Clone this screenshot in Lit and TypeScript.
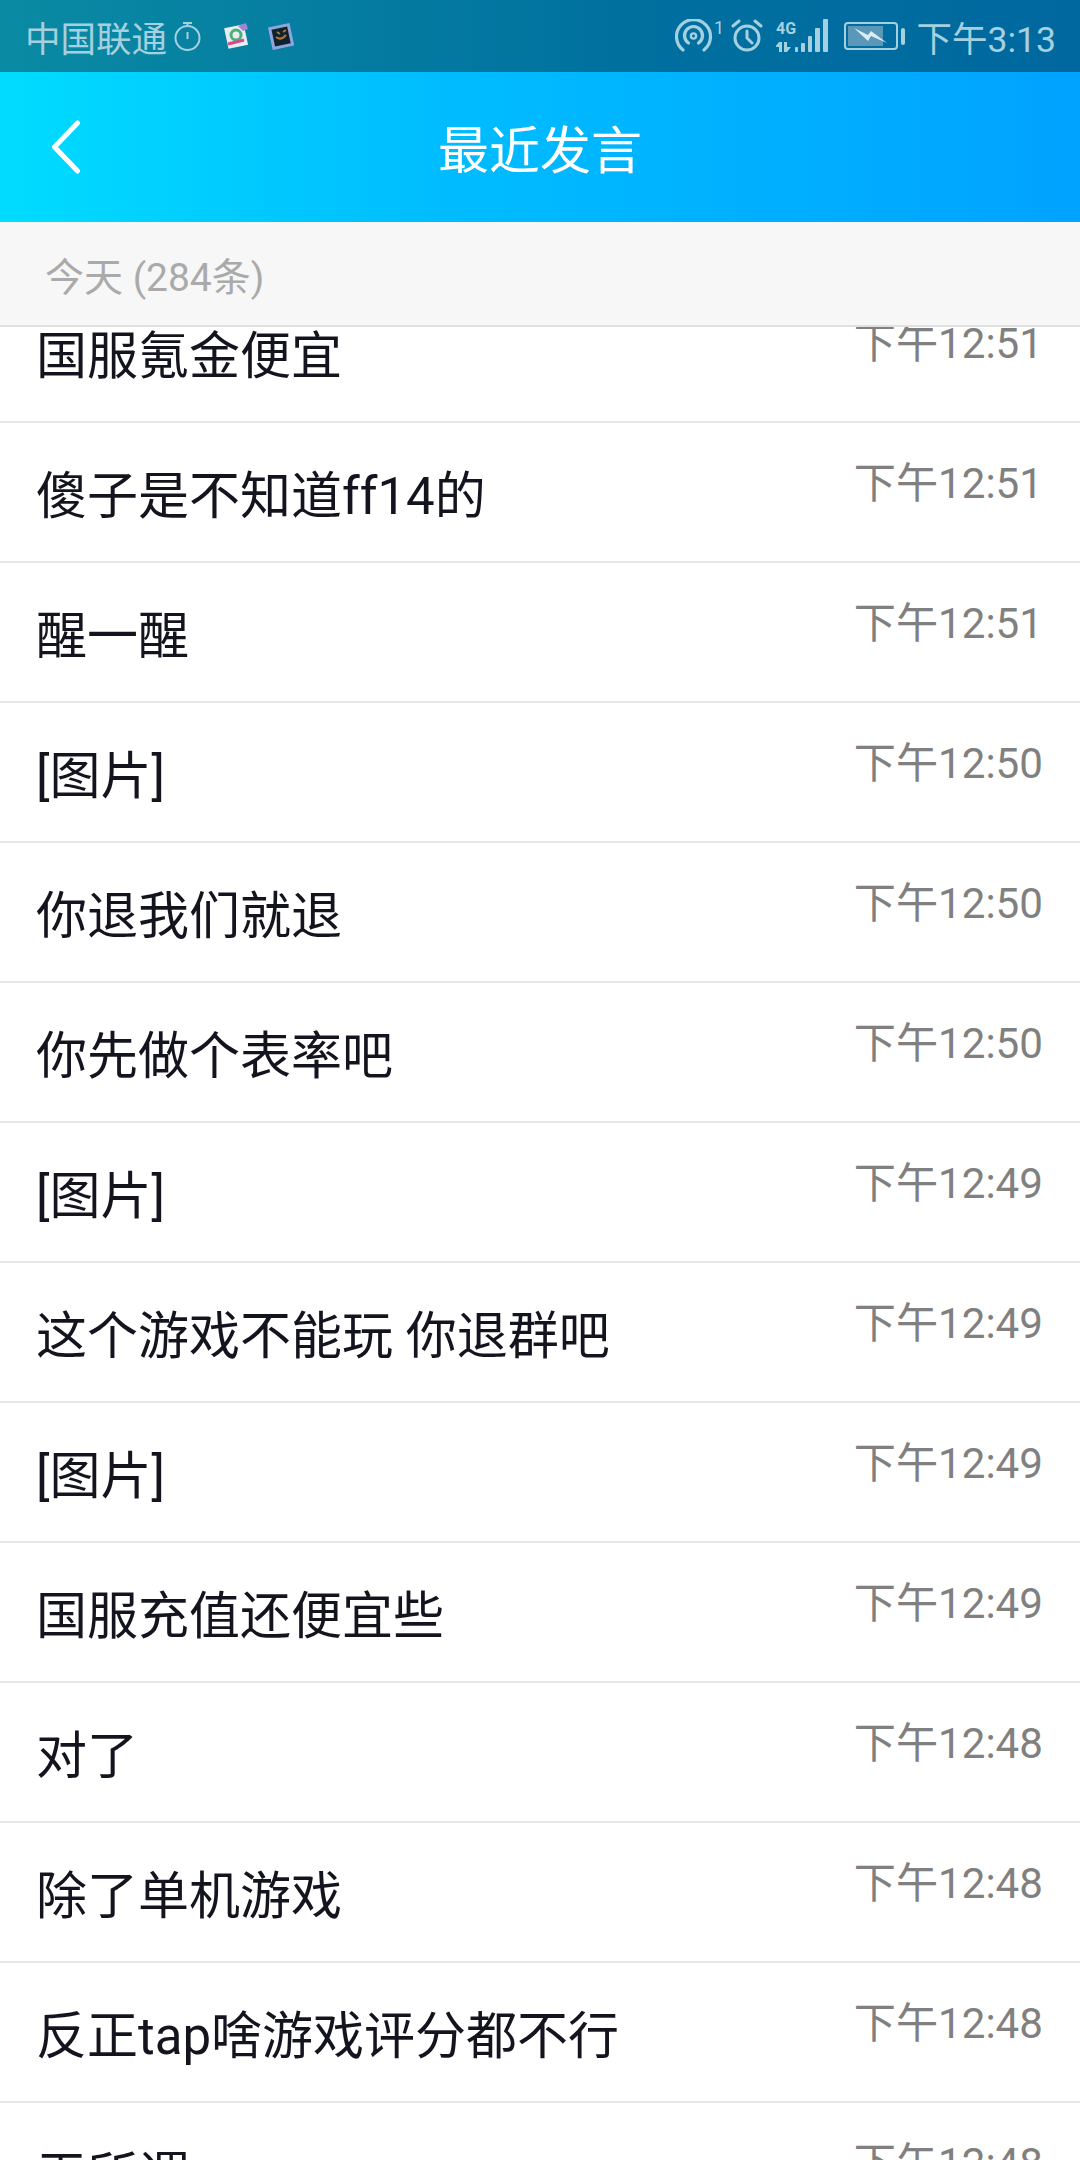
import { LitElement, html, css } from 'lit';
import { customElement } from 'lit/decorators.js';

interface Message {
  text: string;
  time: string;
}

const MESSAGES: Message[] = [
  { text: '国服氪金便宜', time: '下午12:51' },
  { text: '傻子是不知道ff14的', time: '下午12:51' },
  { text: '醒一醒', time: '下午12:51' },
  { text: '[图片]', time: '下午12:50' },
  { text: '你退我们就退', time: '下午12:50' },
  { text: '你先做个表率吧', time: '下午12:50' },
  { text: '[图片]', time: '下午12:49' },
  { text: '这个游戏不能玩 你退群吧', time: '下午12:49' },
  { text: '[图片]', time: '下午12:49' },
  { text: '国服充值还便宜些', time: '下午12:49' },
  { text: '对了', time: '下午12:48' },
  { text: '除了单机游戏', time: '下午12:48' },
  { text: '反正tap啥游戏评分都不行', time: '下午12:48' },
  { text: '无所谓', time: '下午12:48' },
];

@customElement('app-root')
export class AppRoot extends LitElement {
  static styles = css`
    :host {
      display: block;
      width: 1080px;
      height: 2160px;
      overflow: hidden;
      background: #fff;
      font-family: Roboto, 'Noto Sans CJK SC', sans-serif;
    }
    .status {
      height: 72px;
      display: flex;
      align-items: center;
      justify-content: space-between;
      padding: 0 24px 0 25px;
      box-sizing: border-box;
      background: linear-gradient(90deg, #0a8aa3, #00709f 60%, #00689f);
      color: #a5d0df;
      font-size: 35.5px;
    }
    .status-left,
    .status-right {
      display: flex;
      align-items: center;
    }
    .status svg {
      display: block;
      flex: none;
    }
    .stopwatch { margin-left: 7px; }
    .thumb { margin-left: 19px; }
    .stopwatch + .thumb { margin-left: 22px; }
    .alarm { margin-left: 10px; }
    .signal { margin-left: 13px; }
    .battery { margin-left: 16px; }
    .clock-text { margin-left: 12px; }
    .toolbar {
      height: 150px;
      display: flex;
      align-items: center;
      justify-content: center;
      position: relative;
      background: linear-gradient(90deg, #00dcff, #00bdff 40%, #00a3ff);
      color: #fff;
      font-size: 51px;
    }
    .back {
      position: absolute;
      left: 50px;
      top: 48px;
    }
    .subheader {
      height: 105px;
      box-sizing: border-box;
      padding-left: 45px;
      display: flex;
      align-items: center;
      background: #f7f7f7;
      border-bottom: 2px solid #e0e0e0;
      color: #aaa;
      font-size: 39px;
    }
    .list {
      height: 1833px;
      overflow: hidden;
    }
    .rows {
      margin-top: -44px;
    }
    .row {
      height: 140px;
      box-sizing: border-box;
      padding: 0 37px 0 36px;
      display: flex;
      justify-content: space-between;
      border-bottom: 2px solid #e6e6e6;
    }
    .text {
      margin-top: 44px;
      font-size: 51px;
      line-height: 60px;
      color: #14141e;
    }
    .time {
      margin-top: 36px;
      font-size: 42.15px;
      line-height: 50px;
      color: #808080;
    }
  `;

  private renderStatusLeft() {
    return html`
      <div class="status-left">
        <span>中国联通</span>
        <svg class="stopwatch" width="27" height="30" viewBox="0 0 27 30" fill="none" stroke="#a5d0df" stroke-width="2">
          <circle cx="13.5" cy="17" r="12" />
          <path d="M9 2h9M13.5 2v3M13.5 11v7" />
        </svg>
        <svg class="thumb" width="26" height="28" viewBox="0 0 26 28">
          <rect x="3" y="4" width="20" height="21" fill="#e6eef2" transform="rotate(-12 13 14)" />
          <path d="M15 4l8-3 2 6-5 2z" fill="#a583d8" />
          <circle cx="13" cy="13" r="5" fill="none" stroke="#4caf7a" stroke-width="3" />
          <path d="M5 22l16-4" stroke="#d84a8a" stroke-width="3" />
        </svg>
        <svg class="thumb" width="26" height="28" viewBox="0 0 26 28">
          <rect x="2" y="3" width="22" height="23" fill="#8fa6dc" transform="rotate(-12 13 14)" />
          <rect x="5" y="6" width="16" height="17" fill="#10222c" transform="rotate(-12 13 14)" />
          <path d="M8 15q5 4 10-2M9 10l3 2M18 8l-3 2" stroke="#b5752f" stroke-width="2" fill="none" />
        </svg>
      </div>
    `;
  }

  private renderStatusRight() {
    return html`
      <div class="status-right">
        <!-- hotspot -->
        <svg width="46" height="34" viewBox="0 0 46 34" fill="none" stroke="#a5d0df" stroke-width="3.2" stroke-linecap="round">
          <path d="M8 31a17 17 0 1 1 21 0" />
          <path d="M13.5 24a9 9 0 1 1 10 0" />
          <circle cx="18.5" cy="17" r="2.6" stroke-width="2.4" />
          <text x="39" y="15" font-size="18" fill="#a5d0df" stroke="none" font-family="Roboto">1</text>
        </svg>
        <!-- alarm -->
        <svg class="alarm" width="32" height="34" viewBox="0 0 32 34" fill="none" stroke="#a5d0df" stroke-width="3" stroke-linecap="round">
          <circle cx="16" cy="19" r="12" />
          <path d="M16 12v7l5 5M2 7l6-5M30 7l-6-5" />
        </svg>
        <!-- 4G and signal -->
        <svg class="signal" width="52" height="34" viewBox="0 0 52 34" fill="#a5d0df">
          <text x="0" y="15" font-size="16" font-weight="700" font-family="Roboto">4G</text>
          <path d="M3 23h3v10H3zM-1 28l4-5v5zM8 23h3v10H8zM11 33l4-5h-4z" />
          <rect x="19" y="28" width="3" height="5" rx="1" />
          <rect x="25" y="24" width="4" height="9" rx="1" />
          <rect x="32" y="17" width="4" height="16" rx="1" />
          <rect x="39" y="9" width="5" height="24" rx="1" />
          <rect x="47" y="0" width="5" height="33" rx="1" />
        </svg>
        <!-- battery, charging -->
        <svg class="battery" width="61" height="30" viewBox="0 0 61 30">
          <rect x="1" y="2" width="52" height="26" rx="3" fill="none" stroke="#a5d0df" stroke-width="2" />
          <rect x="4" y="5" width="35" height="20" fill="#5a97b8" />
          <path d="M10 7l14 7 3-4 16 12-16-7-3 5z" fill="#dcecf2" />
          <rect x="57" y="7" width="4" height="17" rx="2" fill="#a5d0df" />
        </svg>
        <span class="clock-text">下午3:13</span>
      </div>
    `;
  }

  render() {
    return html`
      <div class="status">${this.renderStatusLeft()}${this.renderStatusRight()}</div>
      <div class="toolbar">
        <svg class="back" width="32" height="54" viewBox="0 0 32 54" fill="none" stroke="#fff" stroke-width="5" stroke-linecap="round" stroke-linejoin="round">
          <path d="M27.5 3L4.5 27l23 24" />
        </svg>
        <span>最近发言</span>
      </div>
      <div class="subheader">今天 (284条)</div>
      <div class="list">
        <div class="rows">
          ${MESSAGES.map(
            (m) => html`
              <div class="row">
                <span class="text">${m.text}</span>
                <span class="time">${m.time}</span>
              </div>
            `
          )}
        </div>
      </div>
    `;
  }
}
